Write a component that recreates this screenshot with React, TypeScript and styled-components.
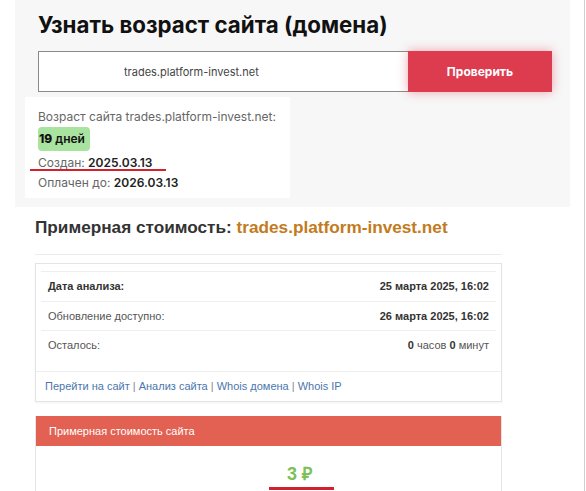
import React from "react";
import styled, { createGlobalStyle } from "styled-components";

const Global = createGlobalStyle`
  html, body { margin: 0; padding: 0; background: #fff; }
  * { box-sizing: border-box; }
`;

const Page = styled.div`
  width: 586px;
  height: 491px;
  overflow: hidden;
  position: relative;
`;

const Frame = styled.div`
  width: 585px;
  border-right: 1px solid #cfcfcf;
`;

const CheckPanel = styled.section`
  margin-left: 15px;
  width: 555px;
  height: 207px;
  background: #f7f7f7;
  padding: 11px 0 0 23px;
  font-family: Inter, "Noto Sans", sans-serif;
`;

const Title = styled.h1`
  margin: 0 0 12px;
  font-size: 22.3px;
  line-height: 28px;
  font-weight: 700;
  color: #111;
`;

const Form = styled.div`
  display: flex;
  width: 514px;
  height: 41px;
`;

const Input = styled.div`
  flex: 0 0 370px;
  border: 1px solid #8a8a8a;
  border-right: none;
  background: #fff;
  display: flex;
  align-items: center;
  padding-left: 85px;
  font-size: 11px;
  color: #444;
`;

const Button = styled.button`
  flex: 1;
  border: none;
  background: #dd3c4e;
  color: #fff;
  font-family: inherit;
  font-size: 12px;
  font-weight: 700;
  box-shadow: 0 0 10px rgba(221, 60, 78, 0.45);
  cursor: pointer;
`;

const AgeBox = styled.div`
  margin: 5px 0 0 -13px;
  width: 265px;
  height: 101px;
  background: #fff;
  padding: 10px 0 0 13px;
  font-size: 12px;
  line-height: 20px;
  color: #666;
  white-space: nowrap;
`;

const Badge = styled.div`
  display: inline-block;
  height: 24px;
  line-height: 24px;
  padding: 0 5px 0 1px;
  background: #a9e3a0;
  border-radius: 4px;
  color: #111;
  font-weight: 600;
  font-size: 12px;
  & b { font-weight: 800; }
`;

const Line = styled.div<{ $marked?: boolean }>`
  position: relative;
  margin-top: ${(p) => (p.$marked ? "2px" : "0")};
  & b { color: #222; font-weight: 600; }
  ${(p) =>
    p.$marked &&
    `&::after {
      content: "";
      position: absolute;
      left: -8px;
      top: 16px;
      width: 136px;
      height: 2px;
      background: #d41f2c;
    }`}
`;

const CostSection = styled.section`
  margin-left: 15px;
  width: 555px;
  padding: 10px 0 0 20px;
  font-family: "Liberation Sans", Arial, sans-serif;
`;

const CostTitle = styled.h2`
  margin: 0;
  font-size: 17.2px;
  line-height: 20px;
  font-weight: 700;
  color: #333;
  & span { color: #c27b1d; }
`;

const Rule = styled.div`
  width: 467px;
  height: 1px;
  background: #ececec;
  margin: 17px 0 8px;
`;

const Card = styled.div`
  width: 467px;
  border: 1px solid #e4e4e4;
  box-shadow: 0 1px 2px rgba(0, 0, 0, 0.05);
  background: #fff;
  padding-top: 7px;
`;

const Table = styled.div`
  margin: 0 5px 11px;
`;

const Row = styled.div<{ $strong?: boolean }>`
  display: flex;
  justify-content: space-between;
  align-items: center;
  height: 29.5px;
  padding: 0 7px;
  border-top: 1px solid #eeeeee;
  font-size: 11px;
  color: #555;
  & > span:first-child {
    color: ${(p) => (p.$strong ? "#333" : "#555")};
    font-weight: ${(p) => (p.$strong ? 700 : 400)};
  }
  & b { color: #333; }
`;

const Links = styled.div`
  border-top: 1px solid #eeeeee;
  height: 30px;
  display: flex;
  align-items: center;
  padding-left: 9px;
  font-size: 11px;
  color: #888;
  & a { color: #4a77ad; text-decoration: none; }
`;

const PriceCard = styled.div`
  width: 467px;
  margin-top: 14px;
  border: 1px solid #e4e4e4;
  border-top: none;
  background: #fff;
`;

const PriceHead = styled.div`
  height: 30px;
  background: #e26152;
  color: #fff;
  font-size: 11px;
  display: flex;
  align-items: center;
  padding-left: 13px;
`;

const PriceBody = styled.div`
  height: 60px;
  padding: 17px 0 0 62px;
  text-align: center;
`;

const Price = styled.span`
  position: relative;
  display: inline-block;
  font-size: 18px;
  line-height: 22px;
  font-weight: 700;
  color: #7dbf58;
  &::after {
    content: "";
    position: absolute;
    left: -18px;
    right: -22px;
    top: 24px;
    height: 3px;
    background: #d41f2c;
  }
`;

const domain = "trades.platform-invest.net";

export default function App() {
  return (
    <Page>
      <Global />
      <Frame>
        <CheckPanel>
          <Title>Узнать возраст сайта (домена)</Title>
          <Form>
            <Input>{domain}</Input>
            <Button>Проверить</Button>
          </Form>
          <AgeBox>
            <Line>Возраст сайта {domain}:</Line>
            <Badge>
              <b>19</b> дней
            </Badge>
            <Line $marked>
              Создан: <b>2025.03.13</b>
            </Line>
            <Line>
              Оплачен до: <b>2026.03.13</b>
            </Line>
          </AgeBox>
        </CheckPanel>
        <CostSection>
          <CostTitle>
            Примерная стоимость: <span>{domain}</span>
          </CostTitle>
          <Rule />
          <Card>
            <Table>
              <Row $strong>
                <span>Дата анализа:</span>
                <b>25 марта 2025, 16:02</b>
              </Row>
              <Row>
                <span>Обновление доступно:</span>
                <b>26 марта 2025, 16:02</b>
              </Row>
              <Row>
                <span>Осталось:</span>
                <span>
                  <b>0</b> часов <b>0</b> минут
                </span>
              </Row>
            </Table>
            <Links>
              <a href="#">Перейти на сайт</a>&nbsp;|&nbsp;<a href="#">Анализ сайта</a>&nbsp;|&nbsp;
              <a href="#">Whois домена</a>&nbsp;|&nbsp;<a href="#">Whois IP</a>
            </Links>
          </Card>
          <PriceCard>
            <PriceHead>Примерная стоимость сайта</PriceHead>
            <PriceBody>
              <Price>3 ₽</Price>
            </PriceBody>
          </PriceCard>
        </CostSection>
      </Frame>
    </Page>
  );
}
